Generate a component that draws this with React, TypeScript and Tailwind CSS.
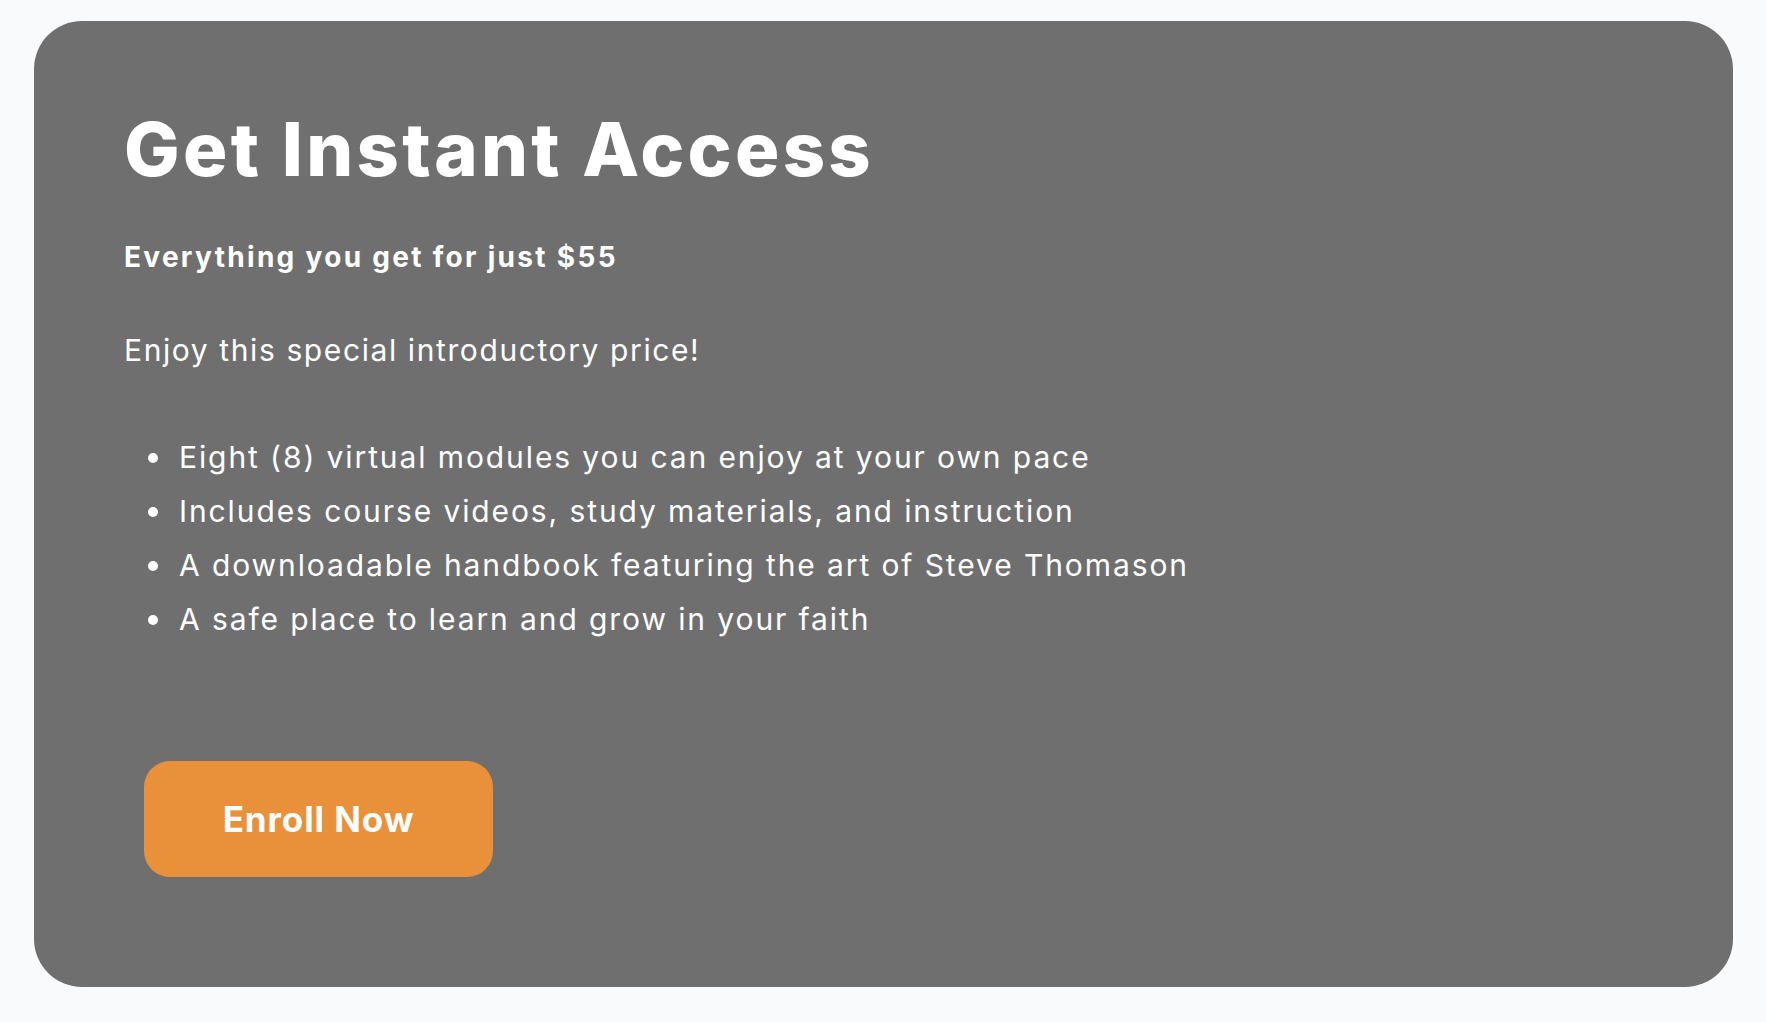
const features = [
  "Eight (8) virtual modules you can enjoy at your own pace",
  "Includes course videos, study materials, and instruction",
  "A downloadable handbook featuring the art of Steve Thomason",
  "A safe place to learn and grow in your faith",
];

const App = () => {
  return (
    <div
      className="min-h-screen bg-[#f9fafb] pt-[21px] pb-[35px] pl-[34px] pr-[33px]"
      style={{ fontFamily: "Inter, 'Open Sans', sans-serif" }}
    >
      <section className="bg-[#6f6f6f] rounded-[48px] pt-[91px] pb-[110px] px-[90px] text-white">
        <h1 className="text-[74px] leading-none font-extrabold tracking-[3.3px]">
          Get Instant Access
        </h1>
        <p className="mt-[57px] text-[28px] leading-none font-bold tracking-[2.3px]">
          Everything you get for just $55
        </p>
        <p className="mt-[64px] text-[30px] leading-none tracking-[1.6px]">
          Enjoy this special introductory price!
        </p>
        <ul className="mt-[65px] pl-[24px]">
          {features.map((item) => (
            <li
              key={item}
              className="flex items-center text-[30px] leading-[54px] tracking-[1.9px]"
            >
              <span className="mt-[2px] mr-[21px] w-[10px] h-[10px] rounded-full bg-white shrink-0" />
              {item}
            </li>
          ))}
        </ul>
        <button className="mt-[115px] ml-[20px] w-[349px] h-[116px] rounded-[26px] bg-[#e9913a] text-[35px] font-bold tracking-[0.9px] text-white">
          Enroll Now
        </button>
      </section>
    </div>
  );
};

export default App;
